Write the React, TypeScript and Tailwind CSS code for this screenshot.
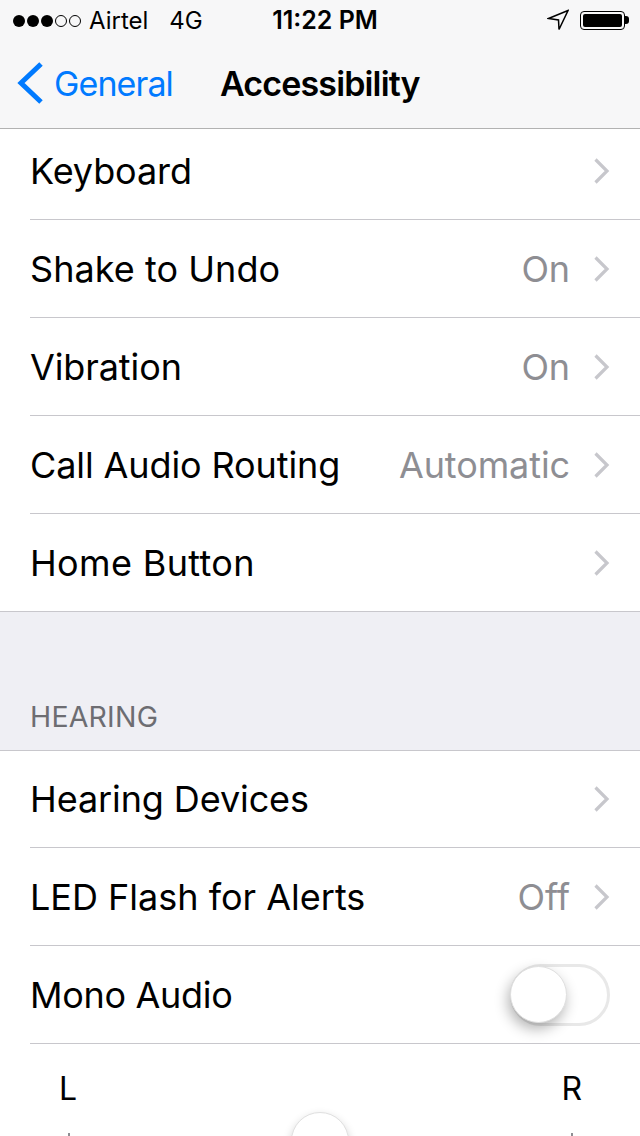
import React from "react";

const FONT = "font-['Inter','Liberation_Sans',sans-serif]";

function Chevron() {
  return (
    <svg width="18" height="28" viewBox="0 0 18 28" className="shrink-0" aria-hidden="true">
      <path d="M2.5 2.5 L14 14 L2.5 25.5" fill="none" stroke="#c7c7cc" strokeWidth="3.2" />
    </svg>
  );
}

function Row({ label, value, last, height = "h-[98px]", inner = "pt-[1px]", track = "tracking-[-0.1px]" }: { label: string; value?: string; last?: boolean; height?: string; inner?: string; track?: string }) {
  return (
    <div className={`${height} pl-[31px] flex flex-col`}>
      <div className={`flex-1 flex items-center pr-[29px] ${inner}`}>
        <span className={`text-[36px] ${track} text-black leading-none flex-1 -ml-[1px]`}>{label}</span>
        {value && <span className="text-[36px] tracking-[-0.1px] text-[#8e8e93] leading-none mr-[23px]">{value}</span>}
        <Chevron />
      </div>
      {!last && <div className="h-[1px] bg-[#c8c7cc] -ml-[1px]" />}
    </div>
  );
}

export default function App() {
  return (
    <div className={`${FONT} w-[640px] h-[1136px] overflow-hidden bg-white relative`}>
      <header className="h-[129px] bg-[#f7f7f8] border-b border-[#b2b2b2] flex flex-col">
        <div className="h-[40px] relative flex items-center pt-[2px] pl-[13px] pr-[11px] text-[24px] text-black">
          <div className="flex items-center gap-[2px]">
            {[0, 1, 2].map((i) => <span key={i} className="w-[12px] h-[12px] rounded-full bg-black" />)}
            {[0, 1].map((i) => <span key={i} className="w-[12px] h-[12px] rounded-full border border-black" />)}
          </div>
          <span className="ml-[8px]">Airtel</span>
          <span className="ml-[21px]">4G</span>
          <span className="absolute left-[10px] right-0 text-center font-semibold text-[25px]">11:22 PM</span>
          <div className="ml-auto flex items-center gap-[11px] -mt-[2px]">
            <svg width="22" height="22" viewBox="0 0 22 22" aria-hidden="true">
              <path d="M21 1.5 L1.5 9.5 L11.5 11 L12 20.5 Z" fill="none" stroke="#000" strokeWidth="1.5" strokeLinejoin="miter" />
            </svg>
            <div className="flex items-center">
              <div className="w-[45px] h-[19px] rounded-[4px] border border-black p-[2px]">
                <div className="w-full h-full bg-black rounded-[2px]" />
              </div>
              <div className="w-[4px] h-[8px] bg-black rounded-r-[3px]" />
            </div>
          </div>
        </div>
        <div className="flex-1 relative flex items-center pb-[2px]">
          <svg width="28" height="44" viewBox="0 0 28 44" className="ml-[16px] shrink-0" aria-hidden="true">
            <path d="M25 3 L5 22 L25 41" fill="none" stroke="#007aff" strokeWidth="5" />
          </svg>
          <span className="ml-[10px] text-[34px] tracking-[-0.9px] text-[#007aff]">General</span>
          <span className="ml-[47px] text-[34px] tracking-[-0.85px] font-semibold text-black">Accessibility</span>
        </div>
      </header>
      <Row label="Keyboard" height="h-[91px]" inner="pb-[6px]" />
      <Row label="Shake to Undo" value="On" track="tracking-[0.05px]" />
      <Row label="Vibration" value="On" />
      <Row label="Call Audio Routing" value="Automatic" />
      <Row label="Home Button" last height="h-[97px]" track="tracking-[0.35px]" />
      <section className="h-[140px] bg-[#efeff4] border-y border-[#c8c7cc] flex items-end pl-[30px] pb-[19px]">
        <span className="text-[28.5px] tracking-[0.2px] leading-none text-[#6d6d72]">HEARING</span>
      </section>
      <Row label="Hearing Devices" height="h-[97px]" inner="" />
      <Row label="LED Flash for Alerts" value="Off" track="tracking-[0px]" />
      <div className="h-[98px] pl-[31px] flex flex-col">
        <div className="flex-1 flex items-center pt-[1px] pr-[30px]">
          <span className="text-[36px] tracking-[-0.3px] text-black leading-none flex-1 -ml-[1px]">Mono Audio</span>
          <div className="relative w-[100px] h-[62px] rounded-full border-[3px] border-[#e8e8e8] bg-white">
            <div className="absolute -left-[3px] -top-[1px] w-[57px] h-[57px] rounded-full bg-white border border-[#e0e0e0] shadow-[-2px_6px_14px_rgba(0,0,0,0.3)]" />
          </div>
        </div>
        <div className="h-[1px] bg-[#c8c7cc] -ml-[1px]" />
      </div>
      <div className="relative h-[92px] flex justify-between pl-[59px] pr-[58px] pt-[26px]">
        <span className="text-[32px] leading-[38px] text-black">L</span>
        <span className="text-[32px] leading-[38px] text-black">R</span>
        <div className="absolute left-[68px] top-[89px] w-[2px] h-[6px] bg-[#8e8e93]" />
        <div className="absolute left-[571px] top-[89px] w-[2px] h-[6px] bg-[#8e8e93]" />
        <div className="absolute left-[291px] top-[68px] w-[58px] h-[58px] rounded-full bg-white border border-[#e0e0e0] shadow-[0_4px_10px_rgba(0,0,0,0.2)]" />
      </div>
    </div>
  );
}
